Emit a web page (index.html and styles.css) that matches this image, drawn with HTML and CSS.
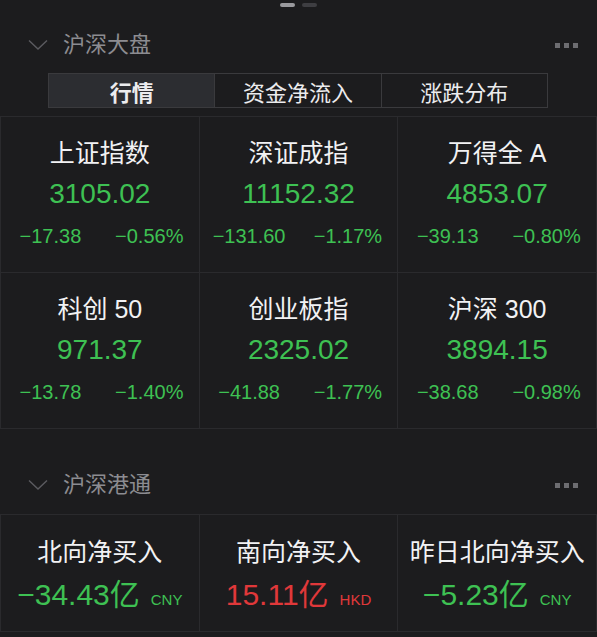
FILE: index.html
```html
<!DOCTYPE html>
<html lang="zh-CN">
<head>
  <meta charset="UTF-8">
  <meta name="viewport" content="width=device-width, initial-scale=1.0">
  <title>沪深大盘</title>
  <link rel="stylesheet" href="styles.css">
</head>
<body>
  <div class="pager">
    <span class="pager-dot active"></span>
    <span class="pager-dot"></span>
  </div>

  <!-- 沪深大盘 -->
  <section class="panel">
    <div class="panel-header">
      <svg class="chevron" width="20" height="12" viewBox="0 0 20 12">
        <polyline points="1,1.5 10,10 19,1.5" fill="none" stroke="#5b5b60" stroke-width="1.4"/>
      </svg>
      <span class="panel-title">沪深大盘</span>
      <span class="more"><i></i><i></i><i></i></span>
    </div>

    <div class="tabs">
      <div class="tab active">行情</div>
      <div class="tab">资金净流入</div>
      <div class="tab">涨跌分布</div>
    </div>

    <div class="index-grid">
      <div class="index-cell">
        <div class="cell-name">上证指数</div>
        <div class="cell-value down">3105.02</div>
        <div class="cell-change down"><span>−17.38</span><span>−0.56%</span></div>
      </div>
      <div class="index-cell">
        <div class="cell-name">深证成指</div>
        <div class="cell-value down">11152.32</div>
        <div class="cell-change down"><span>−131.60</span><span>−1.17%</span></div>
      </div>
      <div class="index-cell">
        <div class="cell-name">万得全 A</div>
        <div class="cell-value down">4853.07</div>
        <div class="cell-change down"><span>−39.13</span><span>−0.80%</span></div>
      </div>
      <div class="index-cell">
        <div class="cell-name">科创 50</div>
        <div class="cell-value down">971.37</div>
        <div class="cell-change down"><span>−13.78</span><span>−1.40%</span></div>
      </div>
      <div class="index-cell">
        <div class="cell-name">创业板指</div>
        <div class="cell-value down">2325.02</div>
        <div class="cell-change down"><span>−41.88</span><span>−1.77%</span></div>
      </div>
      <div class="index-cell">
        <div class="cell-name">沪深 300</div>
        <div class="cell-value down">3894.15</div>
        <div class="cell-change down"><span>−38.68</span><span>−0.98%</span></div>
      </div>
    </div>
  </section>

  <!-- 沪深港通 -->
  <section class="panel panel-connect">
    <div class="panel-header">
      <svg class="chevron" width="20" height="12" viewBox="0 0 20 12">
        <polyline points="1,1.5 10,10 19,1.5" fill="none" stroke="#5b5b60" stroke-width="1.4"/>
      </svg>
      <span class="panel-title">沪深港通</span>
      <span class="more"><i></i><i></i><i></i></span>
    </div>

    <div class="flow-grid">
      <div class="flow-cell">
        <div class="cell-name">北向净买入</div>
        <div class="flow-value down">−34.43亿<span class="unit">CNY</span></div>
      </div>
      <div class="flow-cell">
        <div class="cell-name">南向净买入</div>
        <div class="flow-value up">15.11亿<span class="unit">HKD</span></div>
      </div>
      <div class="flow-cell">
        <div class="cell-name">昨日北向净买入</div>
        <div class="flow-value down">−5.23亿<span class="unit">CNY</span></div>
      </div>
    </div>
  </section>
</body>
</html>
```

FILE: styles.css
```css
:root {
  --bg: #1c1c1e;
  --line: #2a2a2d;
  --text: #f2f2f4;
  --muted: #8c8c91;
  --green: #3ec153;
  --red: #e0383a;
}

* {
  margin: 0;
  padding: 0;
  box-sizing: border-box;
}

body {
  font-family: "Liberation Sans", "Noto Sans CJK SC", sans-serif;
  background-color: var(--bg);
  color: var(--text);
  width: 597px;
  height: 637px;
  overflow: hidden;
}

.pager {
  display: flex;
  justify-content: center;
  gap: 7px;
  padding-top: 3px;
  height: 30px;
}

.pager-dot {
  width: 15px;
  height: 4px;
  border-radius: 2px;
  background-color: #3e3e42;
}

.pager-dot.active {
  background-color: #9a9a9e;
}

.panel-header {
  display: flex;
  align-items: center;
  height: 30px;
  padding: 0 19px 0 28px;
}

.chevron {
  flex-shrink: 0;
}

.panel-title {
  margin-left: 15px;
  font-size: 22px;
  color: var(--muted);
  flex: 1;
  line-height: 30px;
}

.more {
  display: flex;
  gap: 4px;
}

.more i {
  width: 5px;
  height: 5px;
  background-color: #6d6d71;
}

.tabs {
  display: flex;
  margin: 13px 49px 0 48px;
  border: 1px solid #3a3a3d;
  height: 35px;
}

.tab {
  flex: 1;
  display: flex;
  align-items: center;
  justify-content: center;
  font-size: 22px;
  color: #ececee;
  border-left: 1px solid #3a3a3d;
}

.tab:first-child {
  border-left: none;
}

.tab.active {
  background-color: #2c2d31;
  font-weight: 700;
}

.index-grid,
.flow-grid {
  display: grid;
  grid-template-columns: repeat(3, 1fr);
  gap: 1px;
  padding: 1px;
  background-color: var(--line);
}

.index-grid {
  margin-top: 8px;
}

.index-cell {
  background-color: var(--bg);
  height: 155px;
  padding-top: 21px;
  display: flex;
  flex-direction: column;
  align-items: center;
}

.cell-name {
  font-size: 25px;
  line-height: 30px;
  color: var(--text);
  white-space: nowrap;
}

.cell-value {
  margin-top: 10px;
  font-size: 28px;
  line-height: 32px;
}

.cell-change {
  margin-top: 14px;
  width: 100%;
  display: grid;
  grid-template-columns: 1fr 1fr;
  font-size: 20px;
  line-height: 24px;
  text-align: center;
}

.down {
  color: var(--green);
}

.up {
  color: var(--red);
}

.panel-connect {
  margin-top: 41px;
}

.flow-grid {
  margin-top: 14px;
}

.flow-cell {
  background-color: var(--bg);
  height: 116px;
  padding-top: 22px;
  display: flex;
  flex-direction: column;
  align-items: center;
}

.flow-value {
  margin-top: 10px;
  font-size: 30px;
  line-height: 36px;
  white-space: nowrap;
}

.unit {
  font-size: 15px;
  margin-left: 11px;
}
```
